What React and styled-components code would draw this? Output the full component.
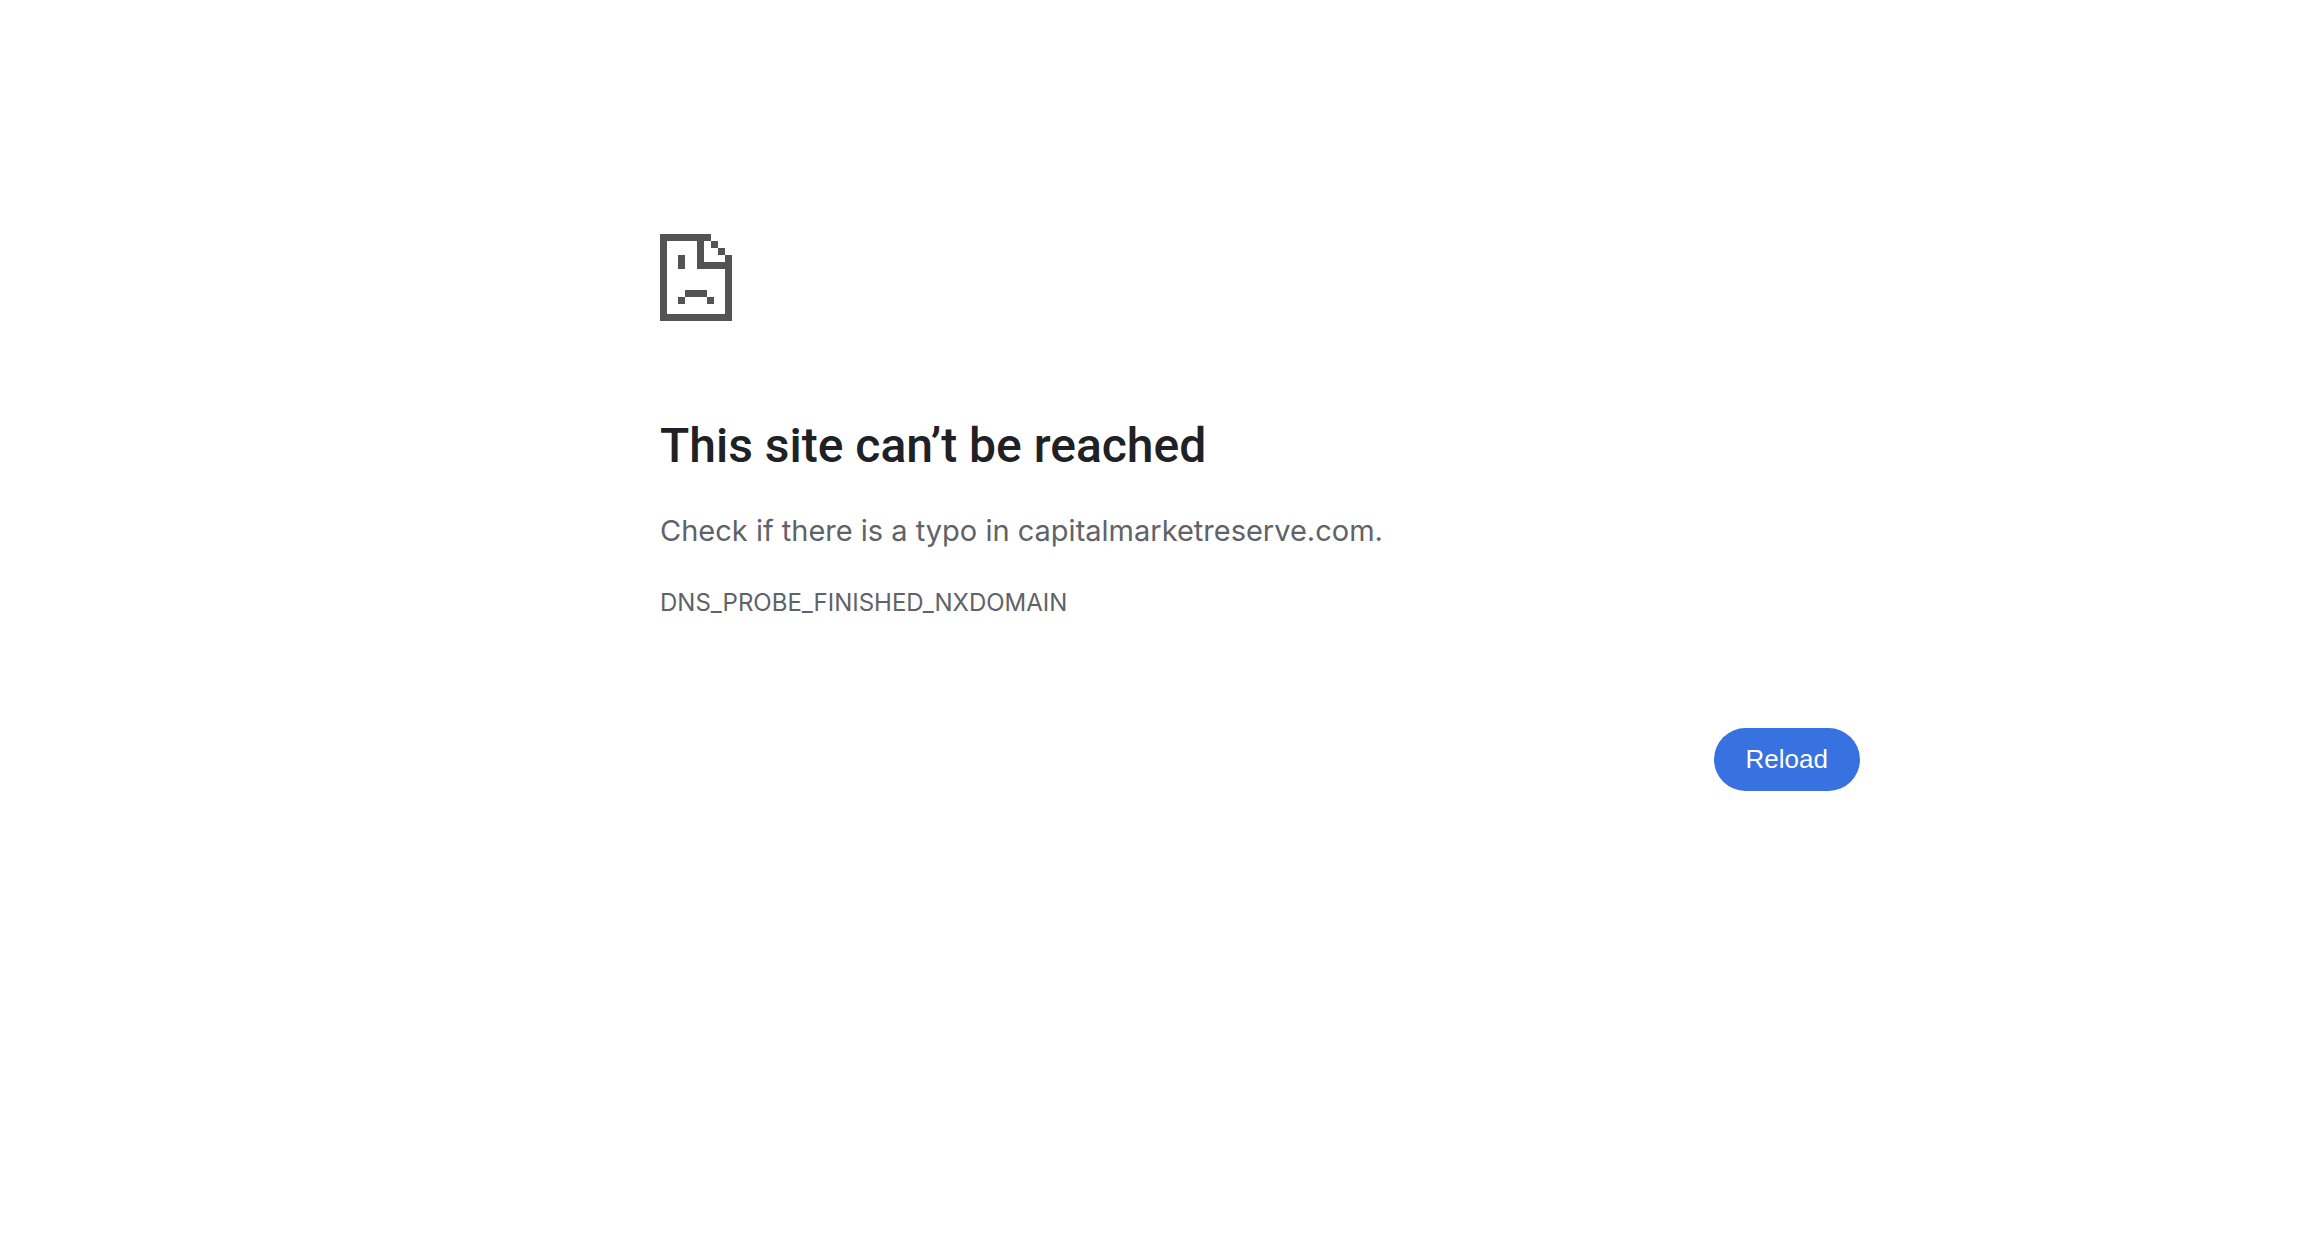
import React from 'react';
import styled, { createGlobalStyle } from 'styled-components';

const App = () => {
  const onClickReload = () => {
    window.location.reload();
  };

  return (
    <>
      <GlobalStyle />
      <Page>
        <Content>
          <SadPageIcon />
          <Title>This site can’t be reached</Title>
          <Summary>Check if there is a typo in capitalmarketreserve.com.</Summary>
          <ErrorCode>DNS_PROBE_FINISHED_NXDOMAIN</ErrorCode>
          <ButtonRow>
            <ReloadButton type="button" onClick={onClickReload}>
              Reload
            </ReloadButton>
          </ButtonRow>
        </Content>
      </Page>
    </>
  );
};

const SadPageIcon = () => (
  <Icon viewBox="0 0 72 87" aria-hidden="true">
    {/* page outline and folded corner */}
    <path d="M0 0H51V7H44V28H65V21H72V87H0ZM7 7V80H65V35H37V7Z" fillRule="evenodd" />
    <path d="M51 7h7v7h-7zM58 14h7v7h-7z" />
    {/* face */}
    <path d="M18 21h7v14h-7zM25 56h22v7h-22zM18 63h7v7h-7zM47 63h7v7h-7z" />
  </Icon>
);

export default App;

const GlobalStyle = createGlobalStyle`
  body {
    margin: 0;
    background-color: #fff;
    color: #5f6368;
    font-family: Inter, 'Liberation Sans', sans-serif;
  }
`;

const Page = styled.main`
  padding: 234px 0 0 204px;
`;

const Content = styled.div`
  display: flex;
  flex-direction: column;
  max-width: 1200px;
  margin: 0 auto;
`;

const Icon = styled.svg`
  width: 72px;
  height: 87px;
  fill: #535353;
  shape-rendering: crispEdges;
`;

const Title = styled.h1`
  margin: 93px 0 33px;
  color: #202124;
  font-family: Roboto, Inter, sans-serif;
  font-size: 48px;
  font-weight: 500;
  line-height: 64px;
`;

const Summary = styled.p`
  margin: 0 0 36px;
  font-size: 29px;
  line-height: 40px;
`;

const ErrorCode = styled.div`
  font-size: 24px;
  line-height: 32px;
`;

const ButtonRow = styled.div`
  display: flex;
  justify-content: flex-end;
  margin-top: 109px;
`;

const ReloadButton = styled.button`
  padding: 16px 32px;
  border: 0;
  border-radius: 32px;
  background-color: #3871e0;
  color: #fff;
  font-family: 'Liberation Sans', Arial, sans-serif;
  font-size: 26px;
  line-height: 31px;
  cursor: pointer;
`;
